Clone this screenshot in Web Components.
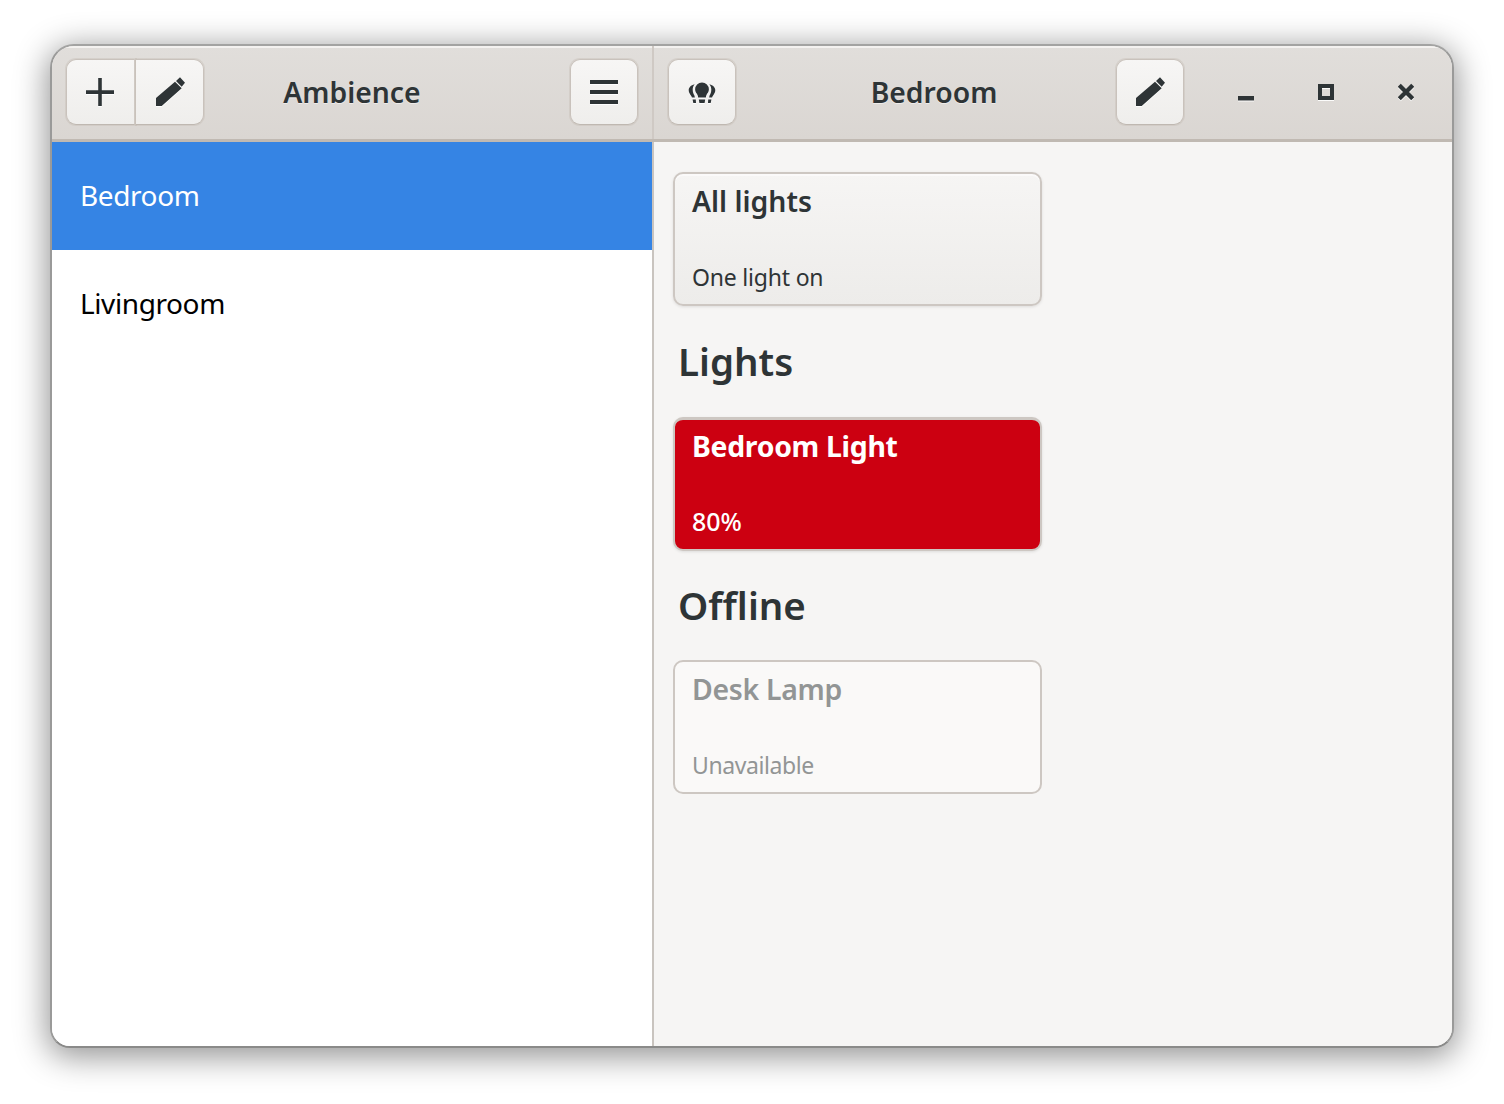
<!DOCTYPE html>
<html>
<head>
<meta charset="utf-8">
<title>Ambience</title>
<style>
  html, body { margin: 0; height: 100%; background: #fff; }
  body { font-family: "Noto Sans", "Open Sans", sans-serif; color: #2e3436; }
</style>
</head>
<body>
<ambience-window>
  <header-pane slot="left" style="width:600px" title-text="Ambience">
    <linked-box slot="start">
      <header-button icon="plus" style="width:70px;padding-right:2px"></header-button>
      <header-button icon="pencil" style="padding-left:1px"></header-button>
    </linked-box>
    <header-button slot="end" icon="menu"></header-button>
  </header-pane>
  <header-pane slot="right" style="flex:1" title-text="Bedroom">
    <header-button slot="start" icon="bulbs"></header-button>
    <header-button slot="end" icon="pencil" style="margin-right:16px"></header-button>
    <window-controls slot="controls"></window-controls>
  </header-pane>

  <room-row slot="sidebar" selected>Bedroom</room-row>
  <room-row slot="sidebar">Livingroom</room-row>

  <light-card slot="content" name="All lights" status="One light on"></light-card>
  <section-title slot="content" style="margin-top:33px">Lights</section-title>
  <light-card slot="content" name="Bedroom Light" status="80%" state="on" style="margin-top:34px"></light-card>
  <section-title slot="content" style="margin-top:32px">Offline</section-title>
  <light-card slot="content" name="Desk Lamp" status="Unavailable" state="off" style="margin-top:33px"></light-card>
</ambience-window>

<script>
const SIDE_BULB = 'M694.500 84.200C691 85 688.700 87.500 688.700 90.300c0 2.400 1.400 3.900 2.500 5.700.4.700.6 1 .7 1.400h3c-.2-1.200-.7-2.300-1.300-3.300-.6-1.200-.9-2.600-.9-4.300 0-2 .4-3.700 1.900-5.600z';

const ICONS = {
  plus: '<path fill="#2e3436" d="M86 90.300h12.200V78h3.600v12.300H114v3.600h-12.200V106h-3.600V93.900H86z"/>',
  pencil: '<path fill="#2e3436" d="M156 98l19-16.300 6.700 6.600L161.700 106H156zM176 81l4-3.700 5 5.400-3.300 4z"/>',
  menu: '<path fill="#2e3436" d="M590 80h28v4h-28zM590 90h28v4h-28zM590 100h28v4h-28z"/>',
  bulbs: `<path fill="#2e3436" d="M702 82.400a6.900 6.900 0 0 1 6.900 6.900c0 2.600-1.500 4-2.300 5.500-.5.900-.7 1.500-.7 2.600h-7.800c0-1.100-.2-1.700-.7-2.600-.8-1.500-2.300-2.900-2.300-5.500a6.900 6.900 0 0 1 6.900-6.900z"/>
    <path fill="#2e3436" d="${SIDE_BULB}"/>
    <path fill="#2e3436" transform="matrix(-1 0 0 1 1404 0)" d="${SIDE_BULB}"/>
    <path fill="#2e3436" d="M698.800 99.600h6.400l-.6 3.400h-5.200zM692.600 99.600h3.200l.2 3.400h-2.700zM708.200 99.600h3.200l-.7 3.400H708z"/>`,
};

function svgIcon(name) {
  const boxes = { plus: '84 76 32 32', pencil: '154 76 32 32', menu: '588 76 32 32', bulbs: '686 76 32 32' };
  return `<svg width="32" height="32" viewBox="${boxes[name]}">${ICONS[name]}</svg>`;
}

class AmbienceWindow extends HTMLElement {
  constructor() {
    super();
    this.attachShadow({ mode: 'open' });
    this.shadowRoot.innerHTML = `
      <style>
        :host {
          display: flex;
          flex-direction: column;
          box-sizing: border-box;
          width: 1404px;
          height: 1004px;
          margin: 44px 0 0 50px;
          border-radius: 24px 24px 20px 20px;
          border: 2px solid #a3a3a2;
          border-bottom-color: #8a8a89;
          border-left-color: #9a9a99;
          border-right-color: #9a9a99;
          box-shadow: 0 6px 32px 3px rgba(0, 0, 0, 0.42);
          overflow: hidden;
          background: #f6f5f4;
        }
        .top {
          display: flex;
          height: 96px;
          flex: none;
          border-bottom: 3px solid #c0b9b2;
          box-sizing: border-box;
        }
        .sep { width: 2px; background: #cfc9c4; flex: none; }
        .main { display: flex; flex: 1; min-height: 0; }
        .side { width: 600px; flex: none; background: #fff; }
        .line { width: 2px; flex: none; background: #c9c4bf; }
        .content {
          flex: 1;
          display: flex;
          flex-direction: column;
          align-items: flex-start;
          padding: 30px 0 0 19px;
          background: #f6f5f4;
        }
      </style>
      <div class="top">
        <slot name="left"></slot>
        <div class="sep"></div>
        <slot name="right"></slot>
      </div>
      <div class="main">
        <div class="side"><slot name="sidebar"></slot></div>
        <div class="line"></div>
        <div class="content"><slot name="content"></slot></div>
      </div>
    `;
  }
}

class HeaderPane extends HTMLElement {
  constructor() {
    super();
    this.attachShadow({ mode: 'open' });
  }

  connectedCallback() {
    this.shadowRoot.innerHTML = `
      <style>
        :host {
          display: flex;
          align-items: center;
          box-sizing: border-box;
          height: 100%;
          padding: 0 14px 1px 14px;
          background: linear-gradient(#e1dedb, #dad6d2);
          box-shadow: inset 0 2px 0 #f4f2f0;
        }
        .bar {
          flex: 1;
          display: grid;
          grid-template-columns: 1fr auto 1fr;
          align-items: center;
        }
        .start { justify-self: start; }
        .end { justify-self: end; }
        .title {
          font-size: 28.300px;
          font-weight: 600;
          color: #2e3436;
          text-shadow: 0 1px 0 rgba(255, 255, 255, 0.5);
        }
      </style>
      <div class="bar">
        <div class="start"><slot name="start"></slot></div>
        <div class="title">${this.getAttribute('title-text')}</div>
        <div class="end"><slot name="end"></slot></div>
      </div>
      <slot name="controls"></slot>
    `;
  }
}

class LinkedBox extends HTMLElement {
  constructor() {
    super();
    this.attachShadow({ mode: 'open' });
    this.shadowRoot.innerHTML = `
      <style>
        :host {
          display: flex;
          border-radius: 10px;
        }
        ::slotted(header-button:first-child) {
          --radius: 10px 0 0 10px;
          --divider: 2px solid #cfc9c3;
        }
        ::slotted(header-button:last-child) {
          --radius: 0 10px 10px 0;
          --left: 0;
        }
      </style>
      <slot></slot>
    `;
  }
}

class HeaderButton extends HTMLElement {
  constructor() {
    super();
    this.attachShadow({ mode: 'open' });
  }

  connectedCallback() {
    this.shadowRoot.innerHTML = `
      <style>
        :host {
          display: flex;
          align-items: center;
          justify-content: center;
          box-sizing: border-box;
          width: 68px;
          height: 66px;
          border: 1px solid #c9c2bc;
          border-left-width: var(--left, 1px);
          border-right: var(--divider, 1px solid #c9c2bc);
          border-bottom-color: #bfb8b1;
          border-radius: var(--radius, 10px);
          background: linear-gradient(#f7f6f5, #efeeec);
          box-shadow: 0 0 0 1px rgba(190, 180, 170, 0.3);
        }
        svg {
          display: block;
          filter: drop-shadow(0 1px 0 rgba(255, 255, 255, 0.9));
        }
      </style>
      ${svgIcon(this.getAttribute('icon'))}
    `;
  }
}

class WindowControls extends HTMLElement {
  constructor() {
    super();
    this.attachShadow({ mode: 'open' });
    this.shadowRoot.innerHTML = `
      <style>
        :host {
          display: flex;
          margin: 0 -8px 0 6px;
        }
        .ctl {
          width: 80px;
          height: 32px;
          display: flex;
          justify-content: center;
        }
        svg {
          display: block;
          filter: drop-shadow(0 1px 0 rgba(255, 255, 255, 0.9));
        }
      </style>
      <div class="ctl"><svg width="16" height="32" viewBox="0 0 16 32"><path fill="#2e3436" d="M0 20h16v4.500H0z"/></svg></div>
      <div class="ctl"><svg width="16" height="32" viewBox="0 0 16 32"><path fill="#2e3436" fill-rule="evenodd" d="M0 8h16v16H0zM4 12v8h8v-8z"/></svg></div>
      <div class="ctl"><svg width="16" height="32" viewBox="0 0 16 32"><path fill="none" stroke="#2e3436" stroke-width="4.200" d="M1.300 9.300l13.400 13.400M14.700 9.300L1.300 22.700"/></svg></div>
    `;
  }
}

class RoomRow extends HTMLElement {
  constructor() {
    super();
    this.attachShadow({ mode: 'open' });
    this.shadowRoot.innerHTML = `
      <style>
        :host {
          display: flex;
          align-items: center;
          box-sizing: border-box;
          height: 108px;
          padding: 0 0 3px 28px;
          font-size: 28px;
          letter-spacing: -0.4px;
          color: #000;
          background: #fff;
        }
        :host([selected]) {
          background: #3584e4;
          color: #fff;
        }
      </style>
      <slot></slot>
    `;
  }
}

class SectionTitle extends HTMLElement {
  constructor() {
    super();
    this.attachShadow({ mode: 'open' });
    this.shadowRoot.innerHTML = `
      <style>
        :host {
          display: block;
          padding-left: 5px;
          font-size: 38.500px;
          line-height: 44px;
          font-weight: 600;
          color: #2e3436;
        }
      </style>
      <slot></slot>
    `;
  }
}

class LightCard extends HTMLElement {
  constructor() {
    super();
    this.attachShadow({ mode: 'open' });
  }

  connectedCallback() {
    this.shadowRoot.innerHTML = `
      <style>
        :host {
          display: flex;
          flex-direction: column;
          justify-content: space-between;
          box-sizing: border-box;
          width: 369px;
          height: 134px;
          padding: 7px 17px 10px 17px;
          border: 2px solid #cdc7c2;
          border-radius: 10px;
          background: linear-gradient(#f6f5f4, #edecea);
          box-shadow: inset 0 2px 0 #fbfafa, 0 1px 3px rgba(0, 0, 0, 0.1);
          color: #2e3436;
        }
        :host([state="on"]) {
          background: #cc0011;
          color: #fff;
          border-top-width: 3px;
          padding-top: 6px;
          padding-bottom: 11px;
          box-shadow: 0 1px 3px rgba(0, 0, 0, 0.1);
        }
        :host([state="off"]) {
          background: #faf9f8;
          color: #929595;
          box-shadow: none;
        }
        .name {
          font-size: 28.400px;
          line-height: 40px;
          font-weight: 600;
        }
        .status {
          font-size: 23px;
          letter-spacing: -0.2px;
          line-height: 34px;
        }
        :host([state="on"]) .name { font-weight: 700; letter-spacing: -0.3px; }
        :host([state="on"]) .status { font-size: 25px; font-weight: 500; letter-spacing: 0; }
        :host([state="off"]) .name { letter-spacing: -0.3px; }
        :host([state="off"]) .status { letter-spacing: -0.4px; }
      </style>
      <div class="name">${this.getAttribute('name')}</div>
      <div class="status">${this.getAttribute('status')}</div>
    `;
  }
}

customElements.define('ambience-window', AmbienceWindow);
customElements.define('header-pane', HeaderPane);
customElements.define('linked-box', LinkedBox);
customElements.define('header-button', HeaderButton);
customElements.define('window-controls', WindowControls);
customElements.define('room-row', RoomRow);
customElements.define('section-title', SectionTitle);
customElements.define('light-card', LightCard);
</script>
</body>
</html>
